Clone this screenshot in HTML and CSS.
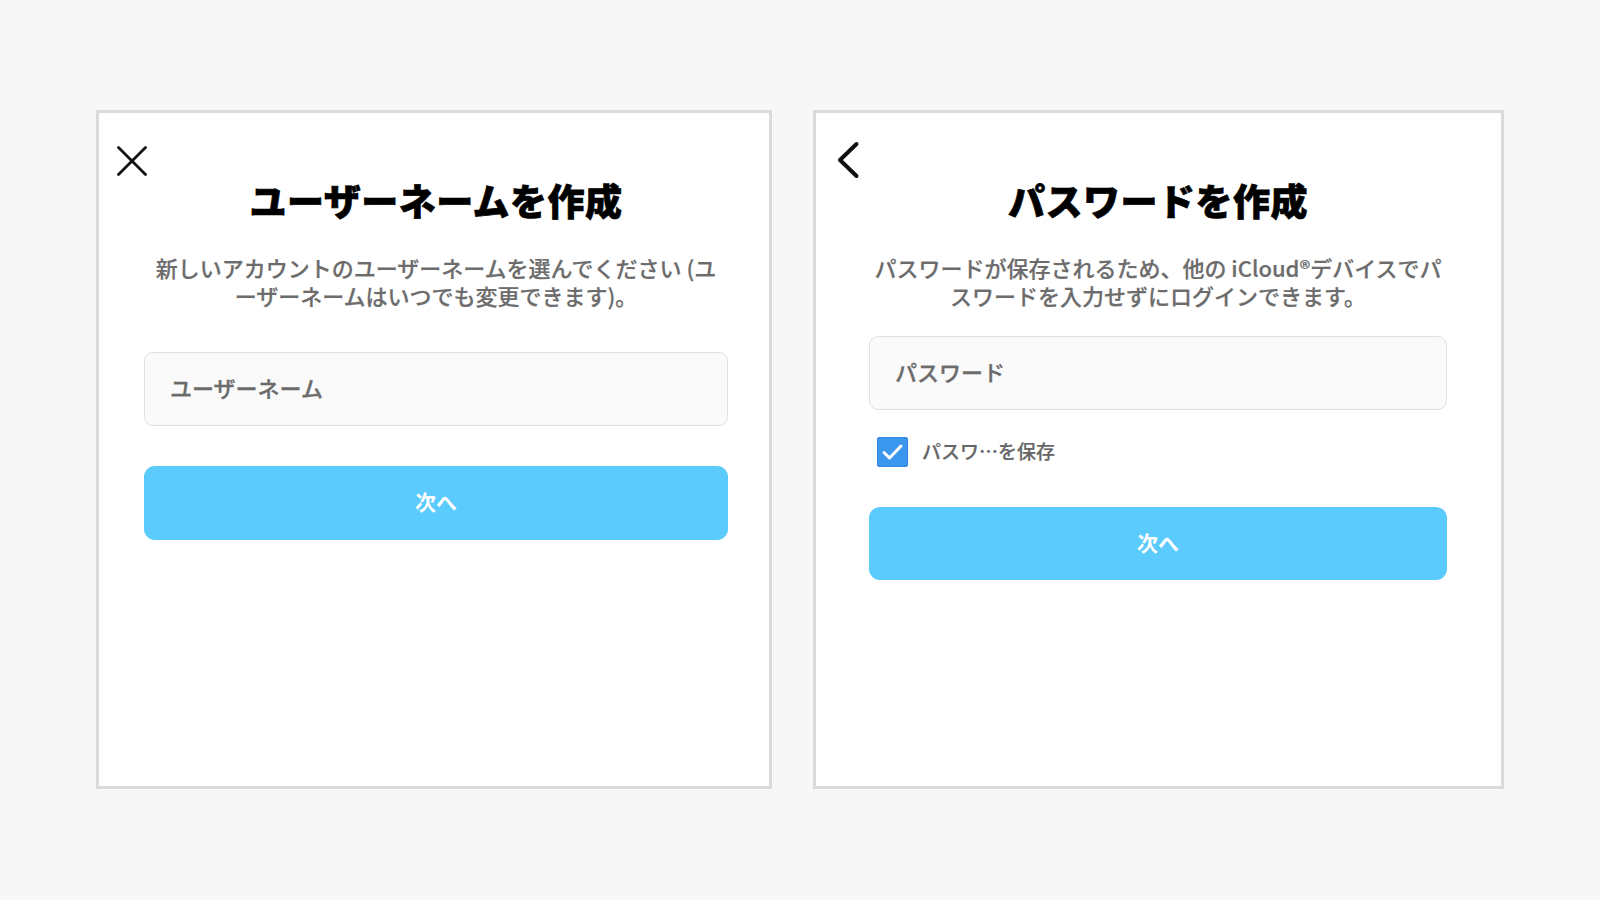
FILE: index.html
```html
<!DOCTYPE html>
<html lang="ja">
<head>
<meta charset="utf-8">
<title>アカウント作成</title>
<link rel="stylesheet" href="styles.css">
</head>
<body>
<div class="stage">
  <section class="panel panel-user">
    <div class="panel-head">
      <svg class="icon-close" width="30" height="30" viewBox="0 0 30 30" aria-label="閉じる">
        <line x1="1.5" y1="1.5" x2="28.5" y2="28.5"/>
        <line x1="28.5" y1="1.5" x2="1.5" y2="28.5"/>
      </svg>
    </div>
    <div class="panel-body">
      <h1 class="title">ユーザーネームを作成</h1>
      <p class="desc">新しいアカウントのユーザーネームを選んでください (ユ<br>ーザーネームはいつでも変更できます)。</p>
      <div class="field field-user"><span class="placeholder">ユーザーネーム</span></div>
      <button class="btn btn-user" type="button">次へ</button>
    </div>
  </section>

  <section class="panel panel-pass">
    <div class="panel-head head-pass">
      <svg class="icon-back" width="24" height="38" viewBox="0 0 24 38" aria-label="戻る">
        <polyline points="20.5,3 4,19 20.5,35"/>
      </svg>
    </div>
    <div class="panel-body body-pass">
      <h1 class="title">パスワードを作成</h1>
      <p class="desc">パスワードが保存されるため、他の iCloud®デバイスでパ<br>スワードを入力せずにログインできます。</p>
      <div class="field field-pass"><span class="placeholder">パスワード</span></div>
      <label class="save-row">
        <span class="checkbox">
          <svg width="31" height="30" viewBox="0 0 31 30">
            <polyline points="7,15.5 12.5,21 24,9"/>
          </svg>
        </span>
        <span class="save-label">パスワ…を保存</span>
      </label>
      <button class="btn btn-pass" type="button">次へ</button>
    </div>
  </section>
</div>
</body>
</html>
```

FILE: styles.css
```css
html, body {
  margin: 0;
  padding: 0;
}

body {
  background: #f7f7f7;
  font-family: "Noto Sans CJK JP", "Noto Sans", sans-serif;
  width: 1600px;
  height: 900px;
  overflow: hidden;
}

.stage {
  display: flex;
  align-items: flex-start;
  gap: 41px;
  padding: 110px 0 0 96px;
}

.panel {
  box-sizing: border-box;
  height: 679px;
  background: #ffffff;
  border: 3px solid #dcdad7;
  display: flex;
  flex-direction: column;
}

.panel-user {
  width: 676px;
}

.panel-pass {
  width: 691px;
}

.panel-head {
  height: 36px;
  padding: 29px 0 0 18px;
  display: flex;
  align-items: flex-start;
}

.head-pass {
  padding-left: 20px;
}

.icon-close {
  display: block;
  margin-top: 4px;
}

.icon-close line {
  stroke: #111;
  stroke-width: 2.8;
  stroke-linecap: round;
}

.icon-back {
  display: block;
  margin-top: -1px;
}

.icon-back polyline {
  fill: none;
  stroke: #111;
  stroke-width: 4;
  stroke-linecap: round;
  stroke-linejoin: round;
}

.panel-body {
  padding: 0 41px 0 45px;
  display: flex;
  flex-direction: column;
}

.body-pass {
  padding: 0 54px 0 53px;
}

.title {
  margin: 0;
  font-size: 37px;
  line-height: 44px;
  font-weight: 900;
  color: #000;
  text-align: center;
  letter-spacing: 0.5px;
  -webkit-text-stroke: 0.7px #000;
}

.desc {
  margin: 31px 0 0;
  font-size: 22px;
  line-height: 28px;
  color: #6c6c6c;
  text-align: center;
  font-weight: 500;
  white-space: nowrap;
  -webkit-text-stroke: 0.2px #6c6c6c;
}

.field {
  box-sizing: border-box;
  height: 74px;
  border: 1px solid #e1e1e1;
  border-radius: 9px;
  background: #fafafa;
  display: flex;
  align-items: center;
  padding: 0 0 4px 25px;
}

.field-user {
  margin-top: 43px;
}

.field-pass {
  margin-top: 27px;
  height: 74px;
}

.placeholder {
  font-size: 22px;
  line-height: 28px;
  color: #6b6b6b;
  font-weight: 500;
  -webkit-text-stroke: 0.3px #6b6b6b;
}

.save-row {
  display: flex;
  align-items: center;
  gap: 14px;
  margin: 26px 0 0 8px;
  height: 31px;
}

.checkbox {
  width: 31px;
  height: 30px;
  border-radius: 3px;
  background: #3b96ee;
  box-shadow: inset 0 0 0 1px #3389e0;
  display: block;
}

.checkbox svg {
  display: block;
}

.checkbox polyline {
  fill: none;
  stroke: #ffffff;
  stroke-width: 3;
  stroke-linecap: round;
  stroke-linejoin: round;
}

.save-label {
  font-size: 19px;
  line-height: 26px;
  color: #666666;
  font-weight: 500;
  padding-bottom: 2px;
  -webkit-text-stroke: 0.2px #666666;
}

.btn {
  box-sizing: border-box;
  height: 74px;
  border: 0;
  border-radius: 11px;
  background: #5bcafd;
  color: #ffffff;
  font-family: "Noto Sans CJK JP", "Noto Sans", sans-serif;
  font-size: 21px;
  font-weight: 700;
  padding: 0 0 4px;
  width: 100%;
  cursor: pointer;
}

.btn-user {
  margin-top: 40px;
}

.btn-pass {
  margin-top: 40px;
  height: 73px;
}
```
